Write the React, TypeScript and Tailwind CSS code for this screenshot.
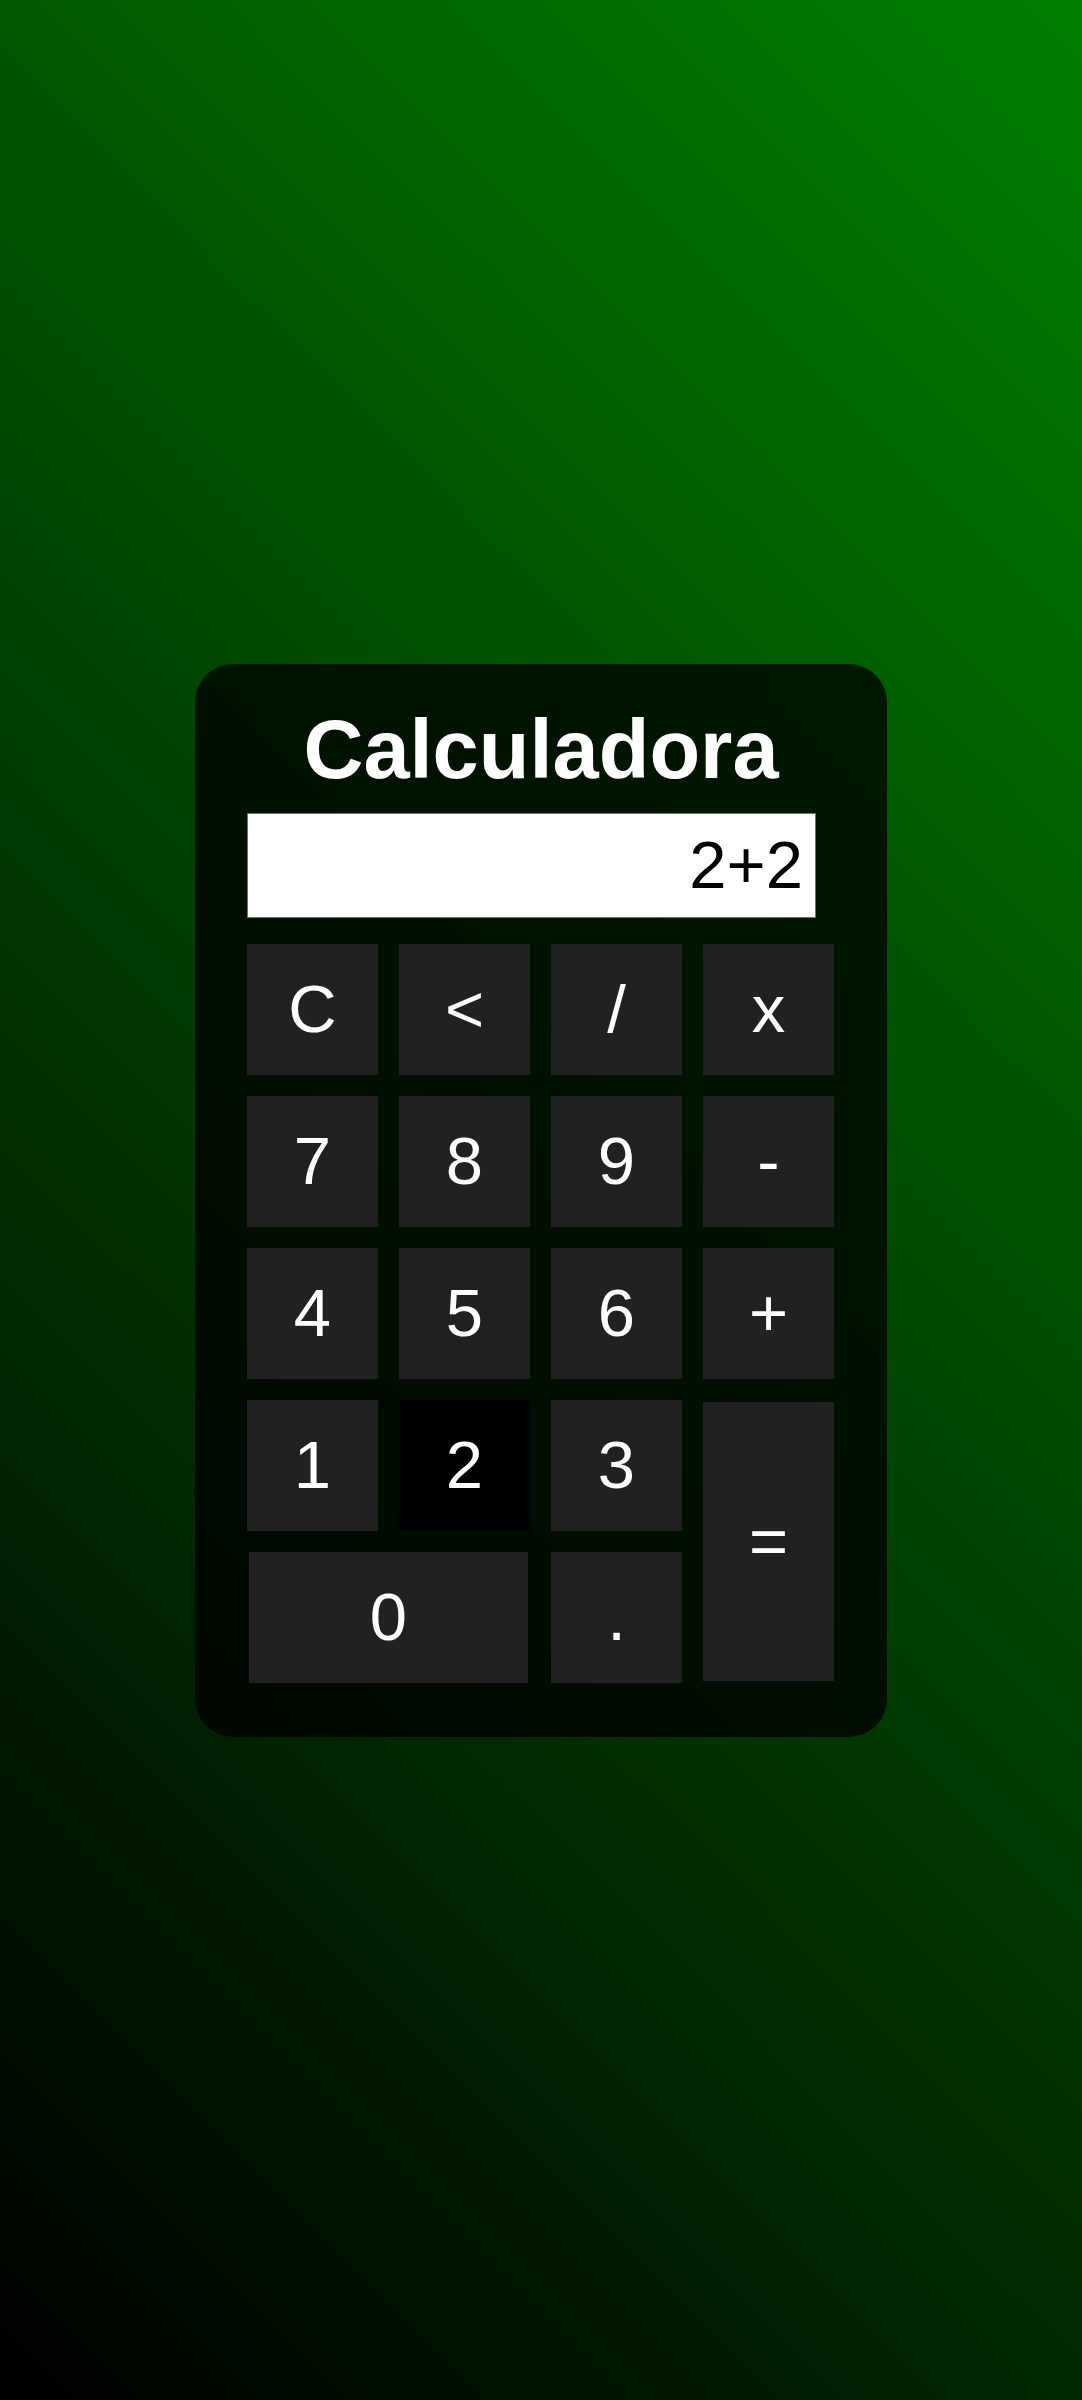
export default function App() {
  const keys = [
    "C", "<", "/", "x",
    "7", "8", "9", "-",
    "4", "5", "6", "+",
  ];

  return (
    <main className="min-h-screen w-full flex items-center justify-center bg-[linear-gradient(45deg,#000000,#008000)] font-['Liberation_Sans',Arial,sans-serif]">
      {/* Calculadora */}
      <div className="w-[692px] h-[1073px] bg-black/75 rounded-[38px] pt-[38px] px-[52px]">

        <h1 className="text-center text-white font-bold text-[83px] leading-[95px]">
          Calculadora
        </h1>

        <div className="mt-[16px] w-[569px] h-[105px] bg-white border border-gray-500 flex items-center justify-end pr-[12px] text-black text-[67px]">
          2+2
        </div>

        <div className="mt-[26px] grid grid-cols-[repeat(4,131px)] auto-rows-[131px] gap-[21px]">
          {keys.map((k) => (
            <button
              key={k}
              className="bg-[#212121] text-white text-[67px] flex items-center justify-center"
            >
              {k}
            </button>
          ))}

          <button className="bg-[#212121] text-white text-[67px] flex items-center justify-center">
            1
          </button>
          <button className="bg-black text-white text-[67px] flex items-center justify-center">
            2
          </button>
          <button className="bg-[#212121] text-white text-[67px] flex items-center justify-center">
            3
          </button>
          <button className="row-span-2 my-[2px] bg-[#212121] text-white text-[67px] flex items-center justify-center">
            =
          </button>

          <button className="col-span-2 mx-[2px] bg-[#212121] text-white text-[67px] flex items-center justify-center">
            0
          </button>
          <button className="bg-[#212121] text-white text-[67px] flex items-center justify-center">
            .
          </button>
        </div>

      </div>
    </main>
  );
}
